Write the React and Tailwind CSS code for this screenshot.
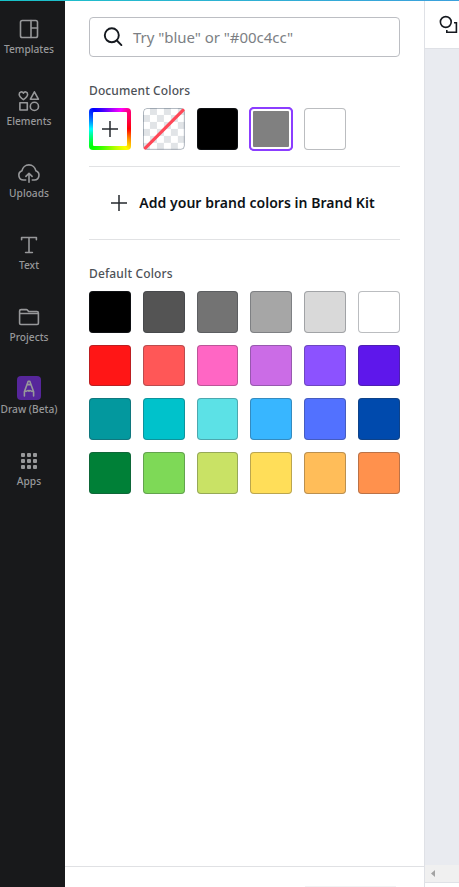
import React from 'react';

const stroke = { fill: 'none', stroke: 'currentColor', strokeWidth: 1.6, strokeLinecap: 'round', strokeLinejoin: 'round' };

function Icon({ children }) {
  return (
    <svg className="block h-6 w-6 overflow-visible" viewBox="0 0 24 24" {...stroke}>
      {children}
    </svg>
  );
}

const navItems = [
  {
    label: 'Templates',
    icon: <><rect x="3.5" y="3.5" width="17" height="17" rx="1.8" /><path d="M14 3.5v17M14 11h6.5" /></>,
  },
  {
    label: 'Elements',
    icon: <><path d="M6.4 10.6C4.4 9.2 2.2 7.6 2.2 5.4 2.2 2.9 5.2 2 6.4 4.2 7.6 2 10.6 2.9 10.6 5.4c0 2.2-2.2 3.8-4.2 5.2zM17.4 2.8l4 7.4h-8zM2.9 13.8h7.4V21H2.9z" /><circle cx="17.4" cy="17.4" r="4.1" /></>,
  },
  {
    label: 'Uploads',
    icon: <><path d="M8.7 19H6.6A4.8 4.8 0 0 1 5 9.7a7 7 0 0 1 13.8 0 4.8 4.8 0 0 1-1.3 9.3h-2.2" /><path d="M12 21.2v-8.6M8.9 15.4l3.1-3.1 3.1 3.1" /></>,
  },
  {
    label: 'Text',
    icon: <path d="M4.6 6.7V4.5h14.8v2.2M12 4.5v15M8.6 19.5h6.8" />,
  },
  {
    label: 'Projects',
    icon: <path d="M2.6 8.5h18.8M4.1 4.6h5.2q.7 0 1.1.5l1.3 1.4h8.2q1.5 0 1.5 1.5v10.3q0 1.2-1.2 1.2H3.8q-1.2 0-1.2-1.2V6.1q0-1.5 1.5-1.5z" />,
  },
  {
    label: 'Draw (Beta)',
    icon: (
      <>
        <rect x="0" y="-1" width="24" height="24" rx="4" fill="#56269b" stroke="none" />
        <path d="M7.4 19v-4.2L11.2 4.2h1.6l3.8 10.6V19M10.2 7.6h3.6M8 13.6q1 1.4 2.2.2.9-.8 1.8.4.9-1.2 1.8-.4 1.2 1.2 2.2-.2" />
      </>
    ),
  },
  {
    label: 'Apps',
    icon: (
      <g fill="currentColor" stroke="none">
        {[4, 10, 16].map((y) => [4, 10, 16].map((x) => <rect key={`${x}-${y}`} x={x} y={y} width="4" height="4" rx="1" />))}
      </g>
    ),
  },
];

const defaultColors = [
  '#000000', '#545454', '#737373', '#a6a6a6', '#d9d9d9', '#ffffff',
  '#ff1616', '#ff5757', '#ff66c4', '#cb6ce6', '#8c52ff', '#5e17eb',
  '#03989e', '#00c2cb', '#5ce1e6', '#38b6ff', '#5271ff', '#004aad',
  '#008037', '#7ed957', '#c9e265', '#ffde59', '#ffbd59', '#ff914d',
];

function Swatch({ color }) {
  return (
    <button
      className="block aspect-square w-full rounded-[4px] shadow-[inset_0_0_0_1px_rgba(43,51,59,0.32)]"
      style={{ backgroundColor: color }}
    />
  );
}

function Plus() {
  return (
    <svg className="block h-6 w-6" viewBox="0 0 24 24" fill="none" stroke="#25292e" strokeWidth="1.5">
      <path d="M12 4v16M4 12h16" />
    </svg>
  );
}

function Sidebar() {
  return (
    <nav className="flex w-[65px] shrink-0 flex-col bg-[#18191b] pt-4 text-[#97989a]">
      {navItems.map((item) => (
        <a key={item.label} className="flex h-[72px] w-[58px] flex-col items-center">
          <Icon>{item.icon}</Icon>
          <span className="mt-px whitespace-nowrap text-[10.2px] leading-[14px] font-medium">{item.label}</span>
        </a>
      ))}
    </nav>
  );
}

function ColorPanel() {
  return (
    <main className="flex w-[360px] shrink-0 flex-col border-r border-[#dfe1e6] bg-white">
      <div className="flex-1 pt-4 pr-6 pl-6">
        <div className="flex h-10 items-center rounded-[4px] border border-[#bcbec3] pl-3">
          <svg className="h-6 w-6" viewBox="0 0 24 24" fill="none" stroke="#15191f" strokeWidth="1.9" strokeLinecap="round">
            <circle cx="9.8" cy="10.3" r="7" />
            <path d="m14.9 15.5 4.5 4.6" />
          </svg>
          <span className="ml-[7px] whitespace-nowrap text-[15px] tracking-[-0.04px] text-[#7c7f84]">Try "blue" or "#00c4cc"</span>
        </div>

        <h2 className="mt-[25px] h-[18px] text-[12px] leading-[18px] font-medium tracking-[0.12px] text-[#4d5157]">Document Colors</h2>
        <div className="mt-2 grid grid-cols-6 gap-3">
          <button className="grid aspect-square place-items-center rounded-[4px] bg-[conic-gradient(from_45deg,#ff0080,#ff0000_45deg,#ffff00_95deg,#00ff00_180deg,#00ffff_225deg,#0000ff_275deg,#ff00ff_345deg,#ff0080)]">
            <span className="grid h-[34px] w-[34px] place-items-center rounded-[1px] bg-white"><Plus /></span>
          </button>
          <button className="aspect-square overflow-hidden rounded-[4px]">
            <svg className="block h-full w-full" viewBox="0 0 42 42">
              <defs>
                <pattern id="checker" width="14" height="14" patternUnits="userSpaceOnUse">
                  <rect width="14" height="14" fill="#fff" />
                  <path d="M7 0h7v7H7zM0 7h7v7H0z" fill="#e1e4e7" />
                </pattern>
              </defs>
              <rect width="42" height="42" fill="url(#checker)" />
              <rect x=".5" y=".5" width="41" height="41" rx="3.5" fill="none" stroke="#394c60" strokeOpacity=".4" />
              <path d="M2 40.5 40.5 2" stroke="#ff4757" strokeWidth="3.2" strokeLinecap="round" />
            </svg>
          </button>
          <Swatch color="#000000" />
          <button className="aspect-square rounded-[4px] bg-[#808080] shadow-[inset_0_0_0_3px_#fff,0_0_0_1px_#8b3dff] outline-2 -outline-offset-1 outline-[#8b3dff]" />
          <Swatch color="#ffffff" />
        </div>

        <div className="mt-4 flex h-[74px] items-center justify-center border-y border-[#e1e2e4] pr-[7px]">
          <Plus />
          <span className="ml-2 whitespace-nowrap text-[14px] font-semibold tracking-[0.03px] text-[#0d1216]">Add your brand colors in Brand Kit</span>
        </div>

        <h2 className="mt-[25px] h-[18px] text-[12px] leading-[18px] font-medium tracking-[0.14px] text-[#4d5157]">Default Colors</h2>
        <div className="mt-[7.9px] grid grid-cols-6 gap-3">
          {defaultColors.map((color) => <Swatch key={color} color={color} />)}
        </div>
      </div>
      <footer className="h-[21px] border-t border-[#e0e1e4] pt-[19px] pr-[28px]">
        <div className="ml-auto h-px w-[91px] bg-[#f1f2f3]" />
      </footer>
    </main>
  );
}

function Workspace() {
  return (
    <section className="flex min-w-0 flex-1 flex-col overflow-hidden bg-[#e9ebf0]">
      <header className="h-12 border-b border-[#dfe1e6] bg-white pt-3 pl-[13px]">
        <svg className="block h-6 w-6" viewBox="0 0 24 24" fill="none" stroke="#15191f" strokeWidth="1.6">
          <circle cx="7.8" cy="9" r="5.4" />
          <path d="M16 9.7h2.4v9.5H8.8v-2.2" />
        </svg>
      </header>
      <div className="flex-1" />
      <div className="flex h-[17px] items-center bg-[#f0f0f0] pl-1.5">
        <svg className="h-[7px] w-1" viewBox="0 0 4 7" fill="#a3a3a3"><path d="M4 0v7L0 3.5z" /></svg>
      </div>
      <div className="h-[5px] border-t border-[#dfe1e6] bg-white" />
    </section>
  );
}

export default function App() {
  return (
    <div className="flex h-[887px] w-[459px] flex-col overflow-hidden bg-white font-['Noto_Sans','Open_Sans',sans-serif]">
      <div className="h-px shrink-0 bg-gradient-to-r from-[#16c2c8] to-[#3ba0dc]" />
      <div className="flex min-h-0 flex-1">
        <Sidebar />
        <ColorPanel />
        <Workspace />
      </div>
    </div>
  );
}
